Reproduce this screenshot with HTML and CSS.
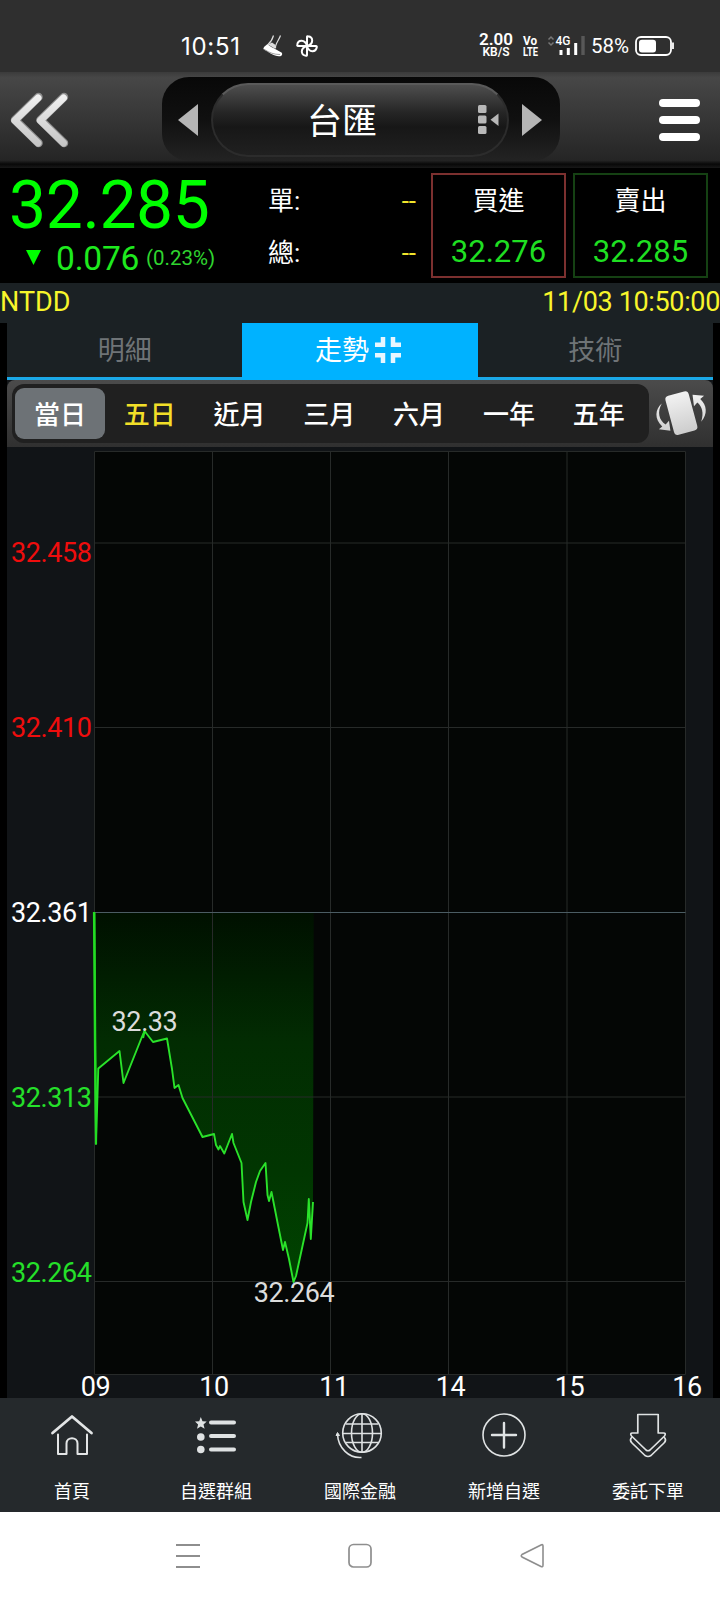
FILE: index.html
```html
<!DOCTYPE html>
<html lang="zh-Hant">

	<head>
		<meta charset="UTF-8">
		<title>台匯</title>
		<link rel="stylesheet" href="styles.css">
	</head>

	<body>
		<div id="main">
			<div class="status">
				<span class="clock">10:51</span>
				<svg class="shoe" width="20" height="22" viewBox="0 0 20 22">
					<path d="M1 12 L4.500 9 C8 12.500 12 13.500 18.500 17.500 C20 19 19 21.500 16 21.300 C11 21 5 17 .3 14z" fill="#fff" />
					<path d="M5 9.500 C8 7 9.500 4 10.500 .5 M12.500 13 C12 9 16 5 17.500 .5" stroke="#ddd" stroke-width="1.200" fill="none" />
					<path d="M5 9.500 L9 7.500 L12.500 10 V14z" fill="#ddd" />
					<path d="M1 14.300 C7 18 11 19.500 17 19.500" stroke="#777" stroke-width=".7" fill="none" />
				</svg>
				<svg class="fan" width="22" height="22" viewBox="0 0 22 22" fill="none" stroke="#fff" stroke-width="2">
					<g id="blade">
						<path d="M11 11 V2 Q11 1 12 1.200 C17.500 2 18 9 11 11z" />
					</g>
					<use href="#blade" transform="rotate(90 11 11)" />
					<use href="#blade" transform="rotate(180 11 11)" />
					<use href="#blade" transform="rotate(270 11 11)" />
				</svg>
				<div class="speed"><b>2.00</b><i>KB/S</i></div>
				<svg class="volte" width="16" height="22" viewBox="0 0 16 22">
					<text x="0" y="9.500" textLength="14" lengthAdjust="spacingAndGlyphs">Vo</text>
					<text x="0" y="21" textLength="15" lengthAdjust="spacingAndGlyphs">LTE</text>
				</svg>
				<svg class="signal" width="40" height="22" viewBox="0 0 40 22">
					<path d="M1.500 4.500 L4 2 L6.500 4.500 M1.500 7.500 L4 10 L6.500 7.500" stroke="#777" stroke-width="1.500" fill="none" />
					<text x="8.500" y="10" font-size="13" font-weight="500" fill="#fff" textLength="15" lengthAdjust="spacingAndGlyphs">4G</text>
					<path d="M14 20 V15 M21.300 20 V13 M28.700 20 V8" stroke="#fff" stroke-width="3" />
					<path d="M36 20 V1" stroke="#585858" stroke-width="3.400" />
				</svg>
				<span class="percent">58%</span>
				<svg class="battery" width="40" height="22" viewBox="0 0 40 22">
					<rect x="1" y="2" width="35" height="18" rx="5" fill="none" stroke="#fff" stroke-width="1.800" />
					<rect x="4" y="4.700" width="17" height="12.800" rx="3" fill="#fff" />
					<path d="M38 7.500 V14" stroke="#fff" stroke-width="1.800" />
				</svg>
			</div>

			<div class="header">
				<svg class="back" width="62" height="60" viewBox="0 0 62 60">
					<defs>
						<linearGradient id="silver" gradientUnits="userSpaceOnUse" x1="0" y1="4" x2="0" y2="56">
							<stop offset="0" stop-color="#f2f2f2" />
							<stop offset="1" stop-color="#c4c4c4" />
						</linearGradient>
					</defs>
					<path d="M32.500 7 L9 30 L32.500 53 M58 7 L34.500 30 L58 53" fill="none" stroke="#8d8d8d" stroke-width="8.500" stroke-linecap="round" stroke-linejoin="round" />
					<path d="M32 8 L8.800 30.500 L32 53 M57.500 8 L34.300 30.500 L57.500 53" fill="none" stroke="url(#silver)" stroke-width="7" stroke-linecap="round" stroke-linejoin="round" />
				</svg>
				<div class="switcher">
					<svg width="20" height="32" viewBox="0 0 20 32"><path d="M20 0 V32 L0 16z" fill="#b5b5b5" /></svg>
					<div class="pill">
						<span>台匯</span>
						<svg width="22" height="30" viewBox="0 0 22 30" fill="#b8b8b8">
							<rect x="0" y="0" width="8.500" height="8" rx="1.500" />
							<rect x="0" y="10.500" width="8.500" height="8" rx="1.500" />
							<rect x="0" y="21" width="8.500" height="8" rx="1.500" />
							<path d="M20.500 8.500 V21 L12.500 14.700z" />
						</svg>
					</div>
					<svg width="20" height="32" viewBox="0 0 20 32"><path d="M0 0 V32 L20 16z" fill="#b5b5b5" /></svg>
				</div>
				<div class="menu"><span></span><span></span><span></span></div>
			</div>

			<div class="quote">
				<div class="price">
					<div class="last">32.285</div>
					<div class="change">
						<svg width="15" height="15" viewBox="0 0 15 15"><path d="M0 0 H15 L7.500 15z" fill="#0f0" /></svg>
						<span class="diff">0.076</span>
						<span class="rate">(0.23%)</span>
					</div>
				</div>
				<div class="volume">
					<p><span>單:</span><em>--</em></p>
					<p><span>總:</span><em>--</em></p>
				</div>
				<div class="deal buy"><span>買進</span><strong>32.276</strong></div>
				<div class="deal sell"><span>賣出</span><strong>32.285</strong></div>
			</div>

			<div class="source"><span>NTDD</span><span class="time">11/03 10:50:00</span></div>

			<div class="content">
				<div class="tabs">
					<div class="tab">明細</div>
					<div class="tab active">走勢
						<svg width="26" height="26" viewBox="0 0 26 26" fill="none" stroke="#e6f6ff" stroke-width="4.500">
							<path d="M8 0 V7.700 H0 M18 0 V7.700 H26 M0 18.300 H8 V26 M26 18.300 H18 V26" />
						</svg>
					</div>
					<div class="tab">技術</div>
				</div>
				<div class="periods">
					<div class="plist">
						<span class="on">當日</span>
						<span class="yellow">五日</span>
						<span>近月</span>
						<span>三月</span>
						<span>六月</span>
						<span>一年</span>
						<span>五年</span>
					</div>
					<svg class="rotate" width="50" height="50" viewBox="0 0 52 50" fill="url(#silver)">
						<rect x="14" y="4" width="25" height="42" rx="4" transform="rotate(-15 27 25.500)" />
						<path d="M6 15 C1 24 3 32 10 37 L13.500 33 L15 43.500 L3 42 L6.500 39 C-2 31 -1 21 6 15z" />
						<path d="M47 34 C50 25 48 18 43 14 L39.500 18 L38 6 L50 7 L46 10.500 C53 17 54 26 47 34z" />
					</svg>
				</div>

				<svg class="chart" width="706" height="951" viewBox="7 447 706 951">
					<defs>
						<linearGradient id="fall" gradientUnits="userSpaceOnUse" x1="0" y1="912" x2="0" y2="1282">
							<stop offset="0" stop-color="#001000" />
							<stop offset=".35" stop-color="#022c02" />
							<stop offset=".7" stop-color="#013601" />
							<stop offset="1" stop-color="#004400" />
						</linearGradient>
					</defs>
					<rect x="94.500" y="451" width="591" height="923" fill="#040605" />
					<path fill="url(#fall)" d="M94.500 912.500 L96 1144 98.300 1068.500 119.500 1051 123.500 1083 141.500 1038 144.500 1031 153 1042 167 1038.500 172 1069 174.500 1088 178.500 1085 182.500 1098 202.500 1137 214 1134 216 1145 218.500 1149.500 220 1146 224.300 1153.500 232 1134 233.500 1143 241.500 1163 243.500 1202 247.500 1220 251 1202 256 1182 260 1171 265.500 1163 267.500 1195 269 1201 271.500 1192 278 1225 283 1250 285 1242 289 1259 293.500 1282 296 1276 307.500 1223 308.800 1199 310.800 1239 313 1202 313.700 912.500z" />
					<path class="grid" d="M94.500 451.500 H685.500 V1374.500 H94.500z M212.500 451 V1374 M330.500 451 V1374 M448.500 451 V1374 M567 451 V1374 M95 543 H685 M95 727.500 H685 M95 1097 H685 M95 1281.500 H685" />
					<path d="M95 912.500 H685.500" stroke="#4b5c63" stroke-width="1.200" />
					<path fill="none" stroke="#2ae22a" stroke-width="1.900" stroke-linejoin="round" d="M94.500 912.500 L96 1144 98.300 1068.500 119.500 1051 123.500 1083 141.500 1038 144.500 1031 153 1042 167 1038.500 172 1069 174.500 1088 178.500 1085 182.500 1098 202.500 1137 214 1134 216 1145 218.500 1149.500 220 1146 224.300 1153.500 232 1134 233.500 1143 241.500 1163 243.500 1202 247.500 1220 251 1202 256 1182 260 1171 265.500 1163 267.500 1195 269 1201 271.500 1192 278 1225 283 1250 285 1242 289 1259 293.500 1282 296 1276 307.500 1223 308.800 1199 310.800 1239 313 1202" />
					<path d="M94 912 L95 1050 96 1144 M143 1038 L144.500 1031" stroke="#22dd22" stroke-width="2.200" fill="none" />
					<g class="yaxis">
						<text x="11" y="562" class="up">32.458</text>
						<text x="11" y="737" class="up">32.410</text>
						<text x="11" y="922">32.361</text>
						<text x="11" y="1106.500" class="down">32.313</text>
						<text x="11" y="1282" class="down">32.264</text>
					</g>
					<g class="xaxis">
						<text x="95.500" y="1396">09</text>
						<text x="214" y="1396">10</text>
						<text x="334" y="1396">11</text>
						<text x="450.500" y="1396">14</text>
						<text x="569.500" y="1396">15</text>
						<text x="687" y="1396">16</text>
					</g>
					<g class="mark">
						<text x="144.500" y="1030.500">32.33</text>
						<text x="294" y="1302">32.264</text>
					</g>
				</svg>
			</div>

			<div class="toolbar">
				<div class="item">
					<svg width="48" height="48" viewBox="0 0 48 48" fill="none" stroke="#e3e5e6" stroke-width="2" stroke-linecap="round" stroke-linejoin="round">
						<path d="M4.500 22 L24 5.500 L43.500 22" stroke-width="2.800" />
						<path d="M10 23.500 V43 H18.500 V32.500 C18.500 25.500 29.500 25.500 29.500 32.500 V43 H39 V23.500" />
					</svg>
					<span>首頁</span>
				</div>
				<div class="item">
					<svg width="48" height="48" viewBox="0 0 48 48" fill="#dfe2e3">
						<path d="M8.800 6 L10.500 10.200 L14.700 10.500 L11.500 13.500 L12.600 17.800 L8.800 15.500 L5 17.800 L6.100 13.500 L3 10.500 L7.200 10.200z" />
						<circle cx="8.800" cy="26" r="3.800" />
						<circle cx="8.800" cy="38.500" r="3.800" />
						<path d="M19 11.500 H42 M19 25 H42 M19 38.500 H42" stroke="#dfe2e3" stroke-width="4" stroke-linecap="round" />
					</svg>
					<span>自選群組</span>
				</div>
				<div class="item">
					<svg width="48" height="48" viewBox="0 0 48 48" fill="none" stroke="#dfe2e3" stroke-width="1.600">
						<circle cx="26" cy="22" r="19.300" />
						<ellipse cx="26" cy="22" rx="10.500" ry="19.300" />
						<path d="M26 3 V41 M6.500 22.500 H45.500 M10 13 H42 M10 31.500 H42" />
						<path d="M1.500 23 C2 37 13 47.500 25.500 46.500" />
						<path d="M0 24.500 L1.500 21.500 L3.500 24.500z" fill="#dfe2e3" stroke-width="1" />
					</svg>
					<span>國際金融</span>
				</div>
				<div class="item">
					<svg width="48" height="48" viewBox="0 0 48 48" fill="none" stroke="#dfe2e3">
						<circle cx="24" cy="24" r="21" stroke-width="1.600" />
						<path d="M24 12 V36.500 M12 24 H36" stroke-width="2.400" stroke-linecap="round" />
					</svg>
					<span>新增自選</span>
				</div>
				<div class="item">
					<svg width="48" height="48" viewBox="0 0 48 48" fill="none" stroke="#dfe2e3" stroke-width="1.700" stroke-linejoin="round">
						<path d="M13.800 3.500 H34.200 V22 H39.500 Q42.500 22 40.500 25 L26 39 Q24 40.500 22 39 L7.500 25 Q5.500 22 8.500 22 H13.800z" />
						<path d="M8 26 Q5 29 8 32 L21 44.500 Q24 46.500 27 44.500 L40 32 Q43 29 40 26" />
					</svg>
					<span>委託下單</span>
				</div>
			</div>

			<div class="sysnav">
				<svg width="24" height="26" viewBox="0 0 24 26" stroke="#8e8e8e" stroke-width="2"><path d="M0 2 H24 M0 13 H24 M0 24 H24" /></svg>
				<svg width="24" height="26" viewBox="0 0 24 26" fill="none" stroke="#8e8e8e" stroke-width="1.700"><rect x="1" y="1.500" width="22" height="22.500" rx="4.500" /></svg>
				<svg width="24" height="26" viewBox="0 0 24 26" fill="none" stroke="#8e8e8e" stroke-width="1.600"><path d="M21 2 Q23 1 23 3 V22 Q23 24.500 21 23.500 L2 14 Q.5 12.800 2 11.500z" /></svg>
			</div>
		</div>
	</body>

</html>
```
FILE: styles.css
```css
* {
	box-sizing: border-box;
}

body {
	margin: 0;
	background-color: #000;
	color: #fff;
	font-family: Roboto, "Noto Sans CJK TC", sans-serif;
}

svg {
	display: block;
	overflow: visible;
	flex: none;
}

#main {
	width: 720px;
	height: 1600px;
	overflow: hidden;
}

/* status bar */
.status {
	height: 72px;
	padding: 20px 43px 0 181px;
	background-color: #2f2f2f;
	display: flex;
	align-items: center;
}

.clock {
	width: 82px;
	font-family: Inter, Roboto, sans-serif;
	font-size: 24px;
	letter-spacing: .7px;
}

.shoe {
	margin-right: 13px;
}

.speed {
	width: 36px;
	margin-left: 160px;
	text-align: center;
}

.speed>b {
	display: block;
	font-size: 17px;
	font-weight: 600;
	line-height: 13px;
}

.speed>i {
	display: block;
	font-style: normal;
	font-weight: 600;
	font-size: 12px;
	line-height: 13px;
}

.volte {
	margin-left: 9px;
}

.volte text {
	font-size: 13px;
	font-weight: bold;
	fill: #fff;
}

.signal {
	margin-left: 8px;
}

.percent {
	width: 40px;
	margin-left: 4px;
	font-size: 20.500px;
	line-height: 24px;
}

.battery {
	margin-left: 4px;
}

/* header */
.header {
	height: 96px;
	padding: 5px 20px 0 6px;
	background: linear-gradient(#3b3b3b, #474747 6%, #252525 92%, #080808 96%, #181818);
	display: flex;
	justify-content: space-between;
}

.back {
	margin-top: 13px;
}

.switcher {
	width: 398px;
	height: 84px;
	margin-left: 94px;
	margin-right: 99px;
	padding: 6px 18px 0 16px;
	border-radius: 27px;
	background: linear-gradient(#080808, #101010 50%, #232323);
	display: flex;
	justify-content: space-between;
}

.switcher>svg {
	margin-top: 21px;
}

.pill {
	width: 298px;
	height: 74px;
	border-radius: 37px;
	border: 2px solid #2c2c2c;
	border-top-color: #5a5a5a;
	background: linear-gradient(#4e4e4e, #252525 40%, #171717 60%, #202020);
	display: flex;
	align-items: center;
	padding-left: 94px;
}

.pill>span {
	font-size: 35px;
	width: 72px;
	white-space: nowrap;
	line-height: 60px;
	padding-top: 6px;
}

.pill>svg {
	margin-left: 99px;
}

.menu {
	margin-top: 22px;
	display: flex;
	flex-direction: column;
	gap: 9px;
}

.menu>span {
	width: 41px;
	height: 8px;
	border-radius: 4px;
	background-color: #fff;
}

/* quote */
.quote {
	height: 115px;
	padding: 5px 12px 0 9px;
	display: flex;
}

.price {
	width: 259px;
	color: #0f0;
}

.last {
	font-size: 66px;
	line-height: 66px;
	letter-spacing: -.4px;
}

.change {
	display: flex;
	align-items: center;
	height: 40px;
	padding-left: 17px;
}

.change>svg {
	margin-top: -3px;
}

.diff {
	font-size: 33.500px;
	line-height: 36px;
	letter-spacing: -.2px;
	margin-left: 15px;
	width: 90px;
	color: #1eea1e;
}

.rate {
	font-size: 20.500px;
	margin-top: -2px;
	color: #2fd52f;
}

.volume {
	width: 148px;
	margin-right: 15px;
	padding-top: 6px;
}

.volume>p {
	margin: 0;
	height: 52px;
	line-height: 45px;
	font-size: 26px;
	display: flex;
	justify-content: space-between;
}

.volume>p>em {
	font-style: normal;
	color: #f0e52c;
}

.deal {
	width: 135px;
	height: 105px;
	padding-top: 2px;
	border: 2px solid #7c302f;
	display: flex;
	flex-direction: column;
	align-items: center;
}

.deal.sell {
	margin-left: 7px;
	border-color: #154113;
}

.deal>span {
	font-size: 26px;
	line-height: 49px;
}

.deal>strong {
	font-weight: normal;
	font-size: 31px;
	line-height: 51px;
	color: #1fdf22;
}

.source {
	height: 40px;
	line-height: 39px;
	background-color: #1b2124;
	color: #f8f52b;
	font-size: 27px;
	display: flex;
	justify-content: space-between;
}

.source>.time {
	letter-spacing: -.35px;
}

/* chart area */
.content {
	width: 706px;
	margin: 0 7px;
	background-color: #111417;
}

.tabs {
	height: 57px;
	border-bottom: 3px solid #1ba9e8;
	background-color: #1b2124;
	display: flex;
}

.tab {
	width: 235.300px;
	height: 54px;
	line-height: 54px;
	padding-top: 2px;
	font-size: 27px;
	color: #6f7477;
	display: flex;
	align-items: center;
	justify-content: center;
	gap: 6px;
}

.tab.active {
	height: 57px;
	padding-bottom: 3px;
	padding-right: 4px;
	color: #fff;
	background-color: #00b2ff;
}

.tab.active>svg {
	margin-top: -2px;
}

.periods {
	height: 67px;
	padding: 4px 7px 4px 5px;
	border-radius: 8px 8px 0 0;
	background: linear-gradient(#4b4b4b, #303030);
	display: flex;
	justify-content: space-between;
}

.plist {
	width: 637px;
	height: 59px;
	padding: 4px 4px 0 3px;
	border-radius: 12px;
	background-color: #202020;
	display: flex;
}

.plist>span {
	width: 89.800px;
	height: 51px;
	padding-top: 2px;
	line-height: 51px;
	text-align: center;
	font-size: 26px;
	font-weight: 500;
	flex: none;
}

.plist>.on {
	background-color: #6d7276;
	border-radius: 9px;
}

.plist>.yellow {
	color: #f2df28;
}

.rotate {
	margin-top: 4px;
}

.chart text {
	font-size: 27px;
	letter-spacing: -.4px;
	fill: #fff;
}

.chart .up {
	fill: #ef0d0d;
}

.chart .down {
	fill: #25e02a;
}

.chart .mark text {
	fill: #dcdcdc;
	text-anchor: middle;
}

.chart .xaxis text {
	text-anchor: middle;
}

.grid {
	fill: none;
	stroke: #272a29;
	stroke-width: 1;
}

/* bottom toolbar */
.toolbar {
	height: 114px;
	background-color: #25292c;
	display: flex;
}

.item {
	flex: 1;
	padding-top: 13px;
	display: flex;
	flex-direction: column;
	align-items: center;
}

.item>span {
	margin-top: 20px;
	font-size: 18px;
	line-height: 26px;
}

.sysnav {
	height: 88px;
	background-color: #fff;
	display: flex;
	justify-content: center;
	align-items: center;
	gap: 148px;
}
```
